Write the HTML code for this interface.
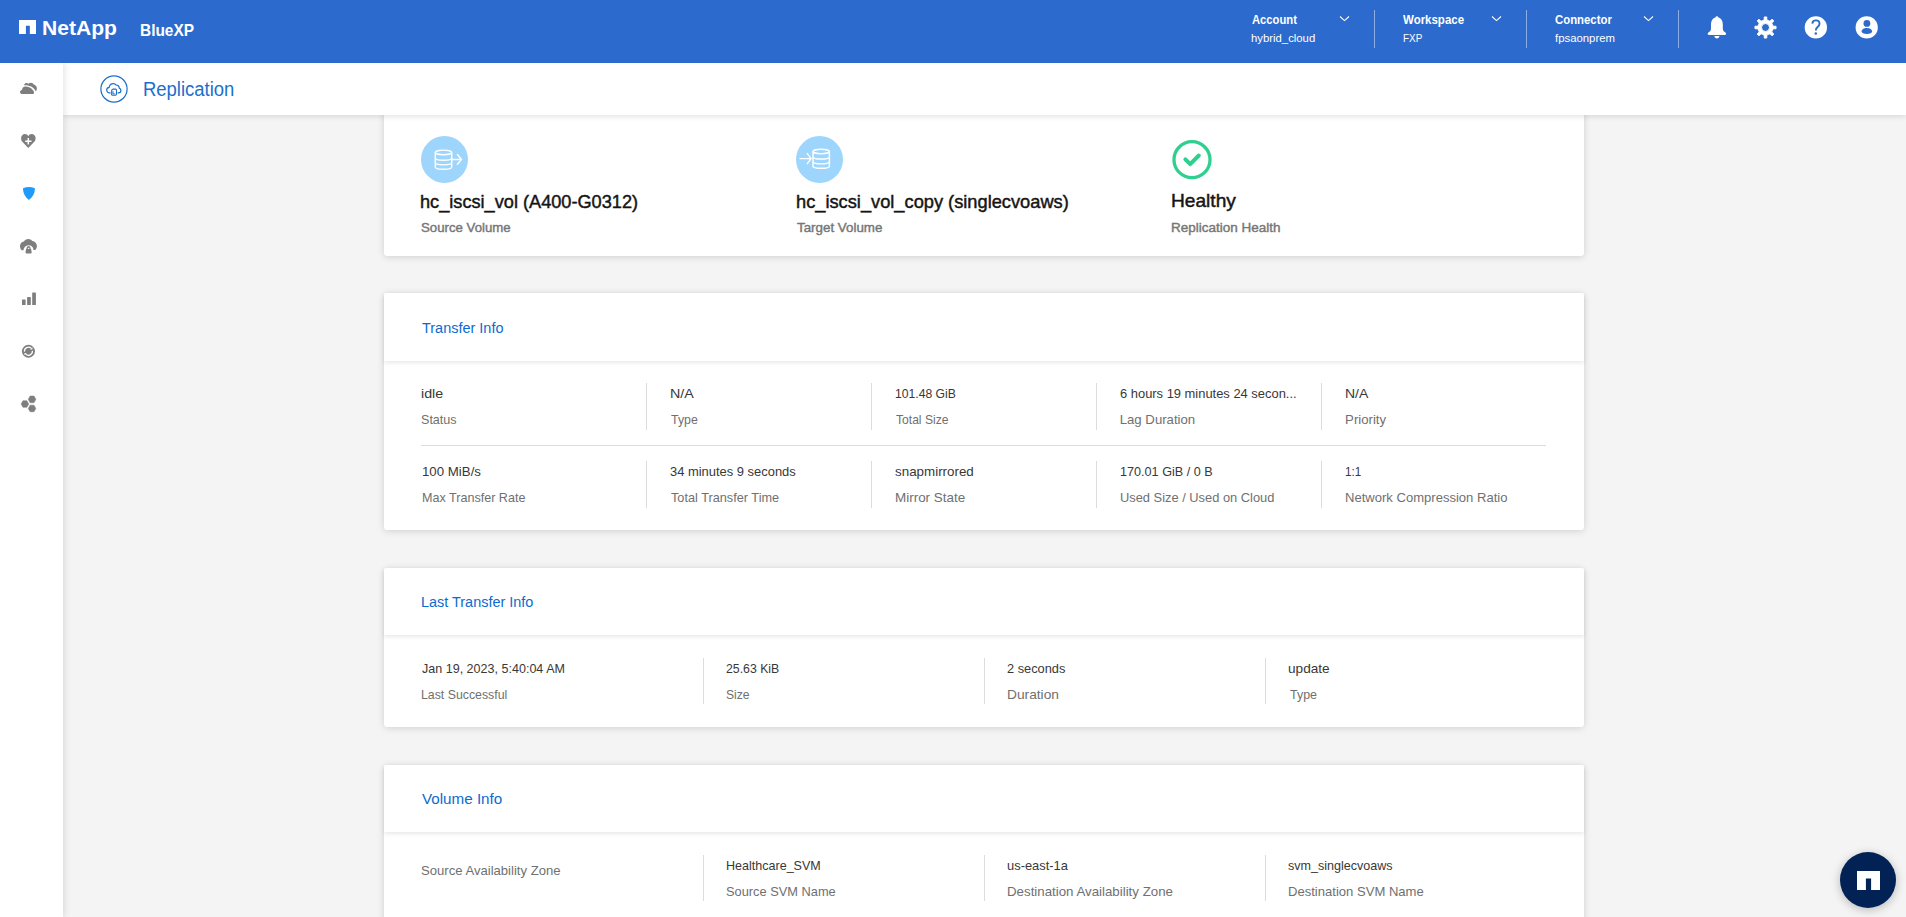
<!DOCTYPE html>
<html>
<head>
<meta charset="utf-8">
<title>Replication - BlueXP</title>
<style>
html,body{margin:0;padding:0;}
body{width:1906px;height:917px;overflow:hidden;position:relative;background:#f4f4f4;font-family:"Liberation Sans",sans-serif;}
.t{position:absolute;white-space:nowrap;transform-origin:0 0;}
.abs{position:absolute;}
#hdr{position:absolute;left:0;top:0;width:1906px;height:63px;background:#2d6acd;z-index:4;}
#side{position:absolute;left:0;top:63px;width:63px;height:854px;background:#ffffff;box-shadow:2px 0 6px rgba(0,0,0,0.10);z-index:3;}
#titlebar{position:absolute;left:63px;top:63px;width:1843px;height:52px;background:#ffffff;box-shadow:0 2px 5px rgba(0,0,0,0.10);z-index:2;}
.card{position:absolute;left:384px;width:1200px;background:#fff;box-shadow:0 1px 7px rgba(0,0,0,0.15);border-radius:3px;}
.chead{position:absolute;left:0;top:0;width:1200px;background:#fff;box-shadow:0 2px 4px rgba(0,0,0,0.09);border-radius:2px 2px 0 0;}
.vd{position:absolute;width:1px;background:#dcdcdc;}
.hd{position:absolute;height:1px;background:#dddddd;}
.hdv{position:absolute;width:1px;background:rgba(255,255,255,0.45);top:10px;height:38px;}
</style>
</head>
<body>
<div id="hdr">
  <!-- NetApp mark -->
  <svg class="abs" style="left:18.9px;top:20.3px" width="17.6" height="14.2" viewBox="0 0 17.6 14.2"><path d="M0 0H17.6V14.2H10.85V5.8H6.9V14.2H0Z" fill="#fff"/></svg>
  <!-- chevrons -->
  <svg class="abs" style="left:1339px;top:15px" width="11" height="7" viewBox="0 0 11 7"><path d="M1 1.5L5.5 5.6L10 1.5" fill="none" stroke="#fff" stroke-width="1.05"/></svg>
  <svg class="abs" style="left:1491px;top:15px" width="11" height="7" viewBox="0 0 11 7"><path d="M1 1.5L5.5 5.6L10 1.5" fill="none" stroke="#fff" stroke-width="1.05"/></svg>
  <svg class="abs" style="left:1643px;top:15px" width="11" height="7" viewBox="0 0 11 7"><path d="M1 1.5L5.5 5.6L10 1.5" fill="none" stroke="#fff" stroke-width="1.05"/></svg>
  <div class="hdv" style="left:1374px"></div>
  <div class="hdv" style="left:1526px"></div>
  <div class="hdv" style="left:1678px"></div>
  <!-- bell -->
  <svg class="abs" style="left:1700px;top:12px" width="34" height="32" viewBox="1700 12 34 32"><path fill="#fff" d="M1716.9 16.2C1717.6 16.2 1718.1 16.7 1718.2 17.3C1721.1 18.2 1722.8 21 1722.8 24.2V28.4C1722.8 30.2 1723.8 31.6 1725.4 32.5C1725.9 32.8 1726.1 33.3 1726.1 33.8C1726.1 34.5 1725.6 35 1724.9 35H1708.9C1708.2 35 1707.7 34.5 1707.7 33.8C1707.7 33.3 1707.9 32.8 1708.4 32.5C1710 31.6 1711 30.2 1711 28.4V24.2C1711 21 1712.7 18.2 1715.6 17.3C1715.7 16.7 1716.2 16.2 1716.9 16.2Z M1714.3 36H1719.5C1719.3 37.4 1718.2 38.4 1716.9 38.4C1715.6 38.4 1714.5 37.4 1714.3 36Z"/></svg>
  <!-- gear -->
  <svg class="abs" style="left:1753.8px;top:15.8px" width="23" height="23" viewBox="0 0 23 23"><path fill="#fff" stroke="#fff" stroke-width="1.0" stroke-linejoin="round" fill-rule="evenodd" d="M10.25 4.00 L10.25 0.97 L12.75 0.97 L12.75 4.00 A7.60 7.60 0 0 1 15.92 5.32 L18.06 3.17 L19.83 4.94 L17.68 7.08 A7.60 7.60 0 0 1 19.00 10.25 L22.03 10.25 L22.03 12.75 L19.00 12.75 A7.60 7.60 0 0 1 17.68 15.92 L19.83 18.06 L18.06 19.83 L15.92 17.68 A7.60 7.60 0 0 1 12.75 19.00 L12.75 22.03 L10.25 22.03 L10.25 19.00 A7.60 7.60 0 0 1 7.08 17.68 L4.94 19.83 L3.17 18.06 L5.32 15.92 A7.60 7.60 0 0 1 4.00 12.75 L0.97 12.75 L0.97 10.25 L4.00 10.25 A7.60 7.60 0 0 1 5.32 7.08 L3.17 4.94 L4.94 3.17 L7.08 5.32 A7.60 7.60 0 0 1 10.25 4.00Z M7.50 11.50 a4.00 4.00 0 1 0 8.00 0 a4.00 4.00 0 1 0 -8.00 0Z"/></svg>
  <!-- help -->
  <svg class="abs" style="left:1800px;top:12px" width="84" height="32" viewBox="1800 12 84 32"><circle cx="1815.85" cy="27.4" r="11.15" fill="#fff"/><path d="M1812.3 23.6C1812.5 21.6 1813.9 20.4 1815.9 20.4C1818 20.4 1819.5 21.8 1819.5 23.7C1819.5 25.2 1818.7 26 1817.6 26.9C1816.4 27.9 1815.9 28.6 1815.9 30V30.6" fill="none" stroke="#2d6acd" stroke-width="1.9"/><circle cx="1815.8" cy="33.5" r="1.25" fill="#2d6acd"/><circle cx="1866.7" cy="27.4" r="11.1" fill="#fff"/><circle cx="1866.9" cy="23.4" r="3.4" fill="#2d6acd"/><path d="M1861.6 31.6C1861.6 29.6 1863.9 28.1 1866.9 28.1C1869.9 28.1 1872.1 29.6 1872.1 31.6C1872.1 33.1 1869.9 34.1 1866.9 34.1C1863.9 34.1 1861.6 33.1 1861.6 31.6Z" fill="#2d6acd"/></svg>
</div>

<div id="side">
  <!-- cloud -->
  <svg class="abs" style="left:14px;top:13px" width="30" height="24" viewBox="14 76 30 24"><path fill="#7e7e7e" d="M21.9 94.1C20.8 94.1 20 93.2 20 92.1C20 91 20.8 90.1 21.9 90C22.2 88 23.4 86.5 25.3 86.4C27.9 86.3 31.6 87.6 33.3 90.7C33.8 91.1 34.1 91.7 34.1 92.4C34.1 93.4 33.4 94.1 32.4 94.1Z"/><path fill="#7e7e7e" d="M24.2 84.6C24.6 83.5 25.5 82.9 26.6 82.9C27.4 82.9 28.1 83.2 28.6 83.7C29.2 83.1 30 82.8 30.9 82.8C32.2 82.8 33.2 83.5 33.7 84.6C35.6 85.1 36.9 86.7 36.9 88.5C36.9 89.6 36.4 90.5 35.7 91.2C34.1 87.4 29.6 85 24.2 85.3Z"/></svg>
  <!-- heart plus -->
  <svg class="abs" style="left:16px;top:65px" width="26" height="26" viewBox="16 128 26 26"><path fill="#7e7e7e" d="M28.3 147.9L22.6 142.1C21.4 140.9 21.1 139.6 21.1 138.2C21.1 135.8 22.8 134 25 134C26.4 134 27.6 134.9 28.3 136.3C29 134.9 30.2 134 31.6 134C33.8 134 35.6 135.8 35.6 138.2C35.6 139.6 35.2 140.9 34 142.1Z"/><path d="M28.3 138.1V144.6M25.2 141.3H31.5" stroke="#fff" stroke-width="1.5"/></svg>
  <!-- shield active -->
  <svg class="abs" style="left:16px;top:117px" width="26" height="26" viewBox="16 180 26 26"><path fill="#1f9bfb" d="M23 188.3C25 187.4 26.9 186.9 28.9 186.9C30.9 186.9 32.9 187.4 34.9 188.3C34.9 193.2 32.6 197.3 28.9 199.9C25.2 197.3 23 193.2 23 188.3Z"/></svg>
  <!-- cloud lock -->
  <svg class="abs" style="left:14px;top:169px" width="30" height="30" viewBox="14 232 30 30"><path fill="#7e7e7e" d="M23.5 250.2H21.7C20.6 249.2 20 247.8 20 246.2C20 243.8 21.6 241.9 23.8 241.5C24.8 240 26.5 239.1 28.2 239.1C29.9 239.1 31.4 239.8 32.4 241.1C35 241.4 36.9 243.5 36.9 246.1C36.9 247.7 36.3 249.1 35.2 250.1H33.5A5 5 0 0 0 23.5 250.2Z"/><path fill="#7e7e7e" d="M26.1 249.1H31.1L31.7 252.6C31.7 253.1 31.3 253.4 30.8 253.4H26.4C25.9 253.4 25.5 253.1 25.5 252.6Z M26.4 249.3C26.4 247.4 27.3 246.1 28.6 246.1C29.9 246.1 30.8 247.4 30.8 249.3Z"/><rect x="27.8" y="247.8" width="1.6" height="1.1" fill="#fff"/></svg>
  <!-- bars -->
  <svg class="abs" style="left:14px;top:221px" width="30" height="30" viewBox="14 284 30 30"><rect x="22" y="299.5" width="3.6" height="5.5" rx="0.6" fill="#7e7e7e"/><rect x="27.1" y="296.9" width="3.7" height="8.1" rx="0.6" fill="#7e7e7e"/><rect x="32.2" y="292.5" width="3.7" height="12.5" rx="0.6" fill="#7e7e7e"/></svg>
  <!-- sync circle -->
  <svg class="abs" style="left:14px;top:273px" width="30" height="30" viewBox="14 336 30 30"><circle cx="28.45" cy="351.25" r="6.5" fill="#7e7e7e"/><path d="M24.47 351.60 A4.00 4.00 0 0 1 31.28 348.42 M32.43 350.90 A4.00 4.00 0 0 1 25.62 354.08" fill="none" stroke="#fff" stroke-width="1.25"/><path d="M32.41 349.55 L32.41 347.29 L30.15 349.55 Z M24.49 352.95 L24.49 355.21 L26.75 352.95 Z" fill="#fff"/></svg>
  <!-- hexagons -->
  <svg class="abs" style="left:14px;top:326px" width="30" height="30" viewBox="14 389 30 30"><path d="M21.10 404.00 L22.95 400.70 L26.85 400.70 L28.70 404.00 L26.85 407.30 L22.95 407.30ZM28.25 399.35 L30.10 396.05 L34.00 396.05 L35.85 399.35 L34.00 402.65 L30.10 402.65ZM28.25 408.45 L30.10 405.15 L34.00 405.15 L35.85 408.45 L34.00 411.75 L30.10 411.75Z" fill="#7e7e7e" stroke="#7e7e7e" stroke-width="0.5" stroke-linejoin="round"/></svg>
</div>

<div id="titlebar">
  <svg class="abs" style="left:37px;top:12px" width="28" height="28" viewBox="0 0 28 28"><g fill="none" stroke="#1b6fcb"><circle cx="14" cy="14" r="13.1" stroke-width="1.2"/><path d="M10.6 17.9H9.6C7.9 17.9 6.7 16.6 6.7 15.1C6.7 13.7 7.7 12.6 9.1 12.4C9.5 10.3 11.1 8.6 13.3 8.6C14.5 8.6 15.5 9.2 16.2 10C18 10.1 19.3 11.5 19.3 13.1C20.3 13.5 20.9 14.4 20.9 15.5C20.9 16.8 19.9 17.8 18.6 17.8H17.6" stroke-width="1.2"/><path d="M12.9 14.1H15.7L16.5 14.9V19.2L15.7 20.2H12.1L11.7 19.6V15.2Z" stroke-width="1.15" stroke-linejoin="round"/><path d="M13 16.3V18.9H14.8" stroke-width="1"/></g></svg>
</div>

<!-- card 1 -->
<div class="card" style="top:40px;height:216px;">
  <svg class="abs" style="left:37px;top:96px" width="47" height="47" viewBox="0 0 47 47"><circle cx="23.5" cy="23.5" r="23.5" fill="#9dd5fc"/><g fill="none" stroke="#fff" stroke-width="1.45"><ellipse cx="22.5" cy="16.4" rx="8.2" ry="2.3"/><path d="M14.3 16.4V30.9C14.3 33.96 30.7 33.96 30.7 30.9V16.4"/><path d="M14.3 21.9C14.3 24.96 30.7 24.96 30.7 21.9"/><path d="M14.3 26.6C14.3 29.66 30.7 29.66 30.7 26.6"/><path d="M30.7 23.4H40.3M36.4 18.6L40.6 23.4L36.4 28.3" stroke-linecap="round" stroke-linejoin="round"/></g></svg>
  <svg class="abs" style="left:412px;top:96px" width="47" height="47" viewBox="0 0 47 47"><circle cx="23.5" cy="23.5" r="23.5" fill="#9dd5fc"/><g fill="none" stroke="#fff" stroke-width="1.45"><ellipse cx="25.2" cy="15.5" rx="8.2" ry="2.2"/><path d="M17.0 15.5V30.2C17.0 32.99 33.4 32.99 33.4 30.2V15.5"/><path d="M17.0 20.9C17.0 23.69 33.4 23.69 33.4 20.9"/><path d="M17.0 25.8C17.0 28.59 33.4 28.59 33.4 25.8"/><path d="M4 22.6H14.8M11.3 17.6L15.1 22.6L11.3 27.6" stroke-linecap="round" stroke-linejoin="round"/></g></svg>
  <svg class="abs" style="left:788px;top:99.6px" width="40" height="40" viewBox="0 0 40 40"><circle cx="20" cy="19.7" r="18" fill="none" stroke="#2fd08f" stroke-width="3.3"/><path d="M13.4 19.4L18.2 24.2L26.8 15.5" fill="none" stroke="#2fd08f" stroke-width="4" stroke-linecap="round" stroke-linejoin="round"/></svg>
</div>

<!-- card 2 transfer info -->
<div class="card" style="top:293px;height:237px;">
  <div class="chead" style="height:68px;"></div>
  <div class="vd" style="left:262px;top:90px;height:47px"></div>
  <div class="vd" style="left:487px;top:90px;height:47px"></div>
  <div class="vd" style="left:712px;top:90px;height:47px"></div>
  <div class="vd" style="left:937px;top:90px;height:47px"></div>
  <div class="hd" style="left:37px;top:152px;width:1125px"></div>
  <div class="vd" style="left:262px;top:168px;height:47px"></div>
  <div class="vd" style="left:487px;top:168px;height:47px"></div>
  <div class="vd" style="left:712px;top:168px;height:47px"></div>
  <div class="vd" style="left:937px;top:168px;height:47px"></div>
</div>

<!-- card 3 last transfer -->
<div class="card" style="top:568px;height:159px;">
  <div class="chead" style="height:67px;"></div>
  <div class="vd" style="left:319px;top:90px;height:46px"></div>
  <div class="vd" style="left:600px;top:90px;height:46px"></div>
  <div class="vd" style="left:881px;top:90px;height:46px"></div>
</div>

<!-- card 4 volume info -->
<div class="card" style="top:765px;height:200px;">
  <div class="chead" style="height:67px;"></div>
  <div class="vd" style="left:319px;top:90px;height:46px"></div>
  <div class="vd" style="left:600px;top:90px;height:46px"></div>
  <div class="vd" style="left:881px;top:90px;height:46px"></div>
</div>

<!-- texts -->
<div style="position:absolute;left:0;top:0;z-index:5">
<div class="t" style="left:41.95px;top:17.67px;font-size:20px;line-height:20px;font-weight:700;color:#ffffff;transform:scaleX(1.0543);">NetApp</div>
<div class="t" style="left:139.66px;top:21.73px;font-size:16.5px;line-height:16.5px;font-weight:700;color:#ffffff;transform:scaleX(0.9357);">BlueXP</div>
<div class="t" style="left:1251.80px;top:14.22px;font-size:12.5px;line-height:12.5px;font-weight:700;color:#ffffff;transform:scaleX(0.8980);">Account</div>
<div class="t" style="left:1250.82px;top:32.67px;font-size:11.5px;line-height:11.5px;font-weight:400;color:#ffffff;transform:scaleX(0.9844);">hybrid_cloud</div>
<div class="t" style="left:1403.40px;top:14.22px;font-size:12.5px;line-height:12.5px;font-weight:700;color:#ffffff;transform:scaleX(0.9182);">Workspace</div>
<div class="t" style="left:1402.54px;top:32.67px;font-size:11.5px;line-height:11.5px;font-weight:400;color:#ffffff;transform:scaleX(0.8619);">FXP</div>
<div class="t" style="left:1555.00px;top:14.22px;font-size:12.5px;line-height:12.5px;font-weight:700;color:#ffffff;transform:scaleX(0.9095);">Connector</div>
<div class="t" style="left:1555.00px;top:32.67px;font-size:11.5px;line-height:11.5px;font-weight:400;color:#ffffff;transform:scaleX(0.9883);">fpsaonprem</div>
<div class="t" style="left:142.71px;top:79.59px;font-size:19.5px;line-height:19.5px;font-weight:400;color:#1b6fcb;transform:scaleX(0.9468);">Replication</div>
<div class="t" style="left:420.22px;top:192.84px;font-size:18.5px;line-height:18.5px;font-weight:400;color:#151515;transform:scaleX(0.9818);-webkit-text-stroke:0.45px #151515;">hc_iscsi_vol (A400-G0312)</div>
<div class="t" style="left:420.58px;top:221.00px;font-size:13px;line-height:13px;font-weight:400;color:#767676;transform:scaleX(1.0172);-webkit-text-stroke:0.4px #767676;">Source Volume</div>
<div class="t" style="left:796.31px;top:192.84px;font-size:18.5px;line-height:18.5px;font-weight:400;color:#151515;transform:scaleX(0.9862);-webkit-text-stroke:0.45px #151515;">hc_iscsi_vol_copy (singlecvoaws)</div>
<div class="t" style="left:796.80px;top:221.00px;font-size:13px;line-height:13px;font-weight:400;color:#767676;transform:scaleX(1.0277);-webkit-text-stroke:0.4px #767676;">Target Volume</div>
<div class="t" style="left:1171.47px;top:192.44px;font-size:18.5px;line-height:18.5px;font-weight:400;color:#151515;transform:scaleX(1.0339);-webkit-text-stroke:0.45px #151515;">Healthy</div>
<div class="t" style="left:1170.76px;top:220.70px;font-size:13px;line-height:13px;font-weight:400;color:#767676;transform:scaleX(1.0385);-webkit-text-stroke:0.4px #767676;">Replication Health</div>
<div class="t" style="left:421.80px;top:320.18px;font-size:15.5px;line-height:15.5px;font-weight:400;color:#0b6bcf;transform:scaleX(0.9333);">Transfer Info</div>
<div class="t" style="left:421.27px;top:594.08px;font-size:15.5px;line-height:15.5px;font-weight:400;color:#0b6bcf;transform:scaleX(0.9311);">Last Transfer Info</div>
<div class="t" style="left:421.60px;top:791.08px;font-size:15.5px;line-height:15.5px;font-weight:400;color:#0b6bcf;transform:scaleX(0.9802);">Volume Info</div>
<div class="t" style="left:421.32px;top:387.13px;font-size:13.2px;line-height:13.2px;font-weight:400;color:#383838;transform:scaleX(1.0789);">idle</div>
<div class="t" style="left:421.45px;top:412.93px;font-size:13.2px;line-height:13.2px;font-weight:400;color:#707070;transform:scaleX(0.9528);">Status</div>
<div class="t" style="left:669.82px;top:387.13px;font-size:13.2px;line-height:13.2px;font-weight:400;color:#383838;transform:scaleX(1.0810);">N/A</div>
<div class="t" style="left:670.90px;top:412.93px;font-size:13.2px;line-height:13.2px;font-weight:400;color:#707070;transform:scaleX(0.9393);">Type</div>
<div class="t" style="left:895.48px;top:387.13px;font-size:13.2px;line-height:13.2px;font-weight:400;color:#383838;transform:scaleX(0.9231);">101.48 GiB</div>
<div class="t" style="left:896.40px;top:412.93px;font-size:13.2px;line-height:13.2px;font-weight:400;color:#707070;transform:scaleX(0.9175);">Total Size</div>
<div class="t" style="left:1119.72px;top:387.13px;font-size:13.2px;line-height:13.2px;font-weight:400;color:#383838;transform:scaleX(0.9792);">6 hours 19 minutes 24 secon...</div>
<div class="t" style="left:1119.70px;top:412.93px;font-size:13.2px;line-height:13.2px;font-weight:400;color:#707070;">Lag Duration</div>
<div class="t" style="left:1345.04px;top:387.13px;font-size:13.2px;line-height:13.2px;font-weight:400;color:#383838;transform:scaleX(1.0619);">N/A</div>
<div class="t" style="left:1345.10px;top:412.93px;font-size:13.2px;line-height:13.2px;font-weight:400;color:#707070;">Priority</div>
<div class="t" style="left:421.69px;top:464.53px;font-size:13.2px;line-height:13.2px;font-weight:400;color:#383838;transform:scaleX(1.0053);">100 MiB/s</div>
<div class="t" style="left:421.75px;top:490.53px;font-size:13.2px;line-height:13.2px;font-weight:400;color:#707070;transform:scaleX(0.9533);">Max Transfer Rate</div>
<div class="t" style="left:669.62px;top:464.53px;font-size:13.2px;line-height:13.2px;font-weight:400;color:#383838;transform:scaleX(0.9803);">34 minutes 9 seconds</div>
<div class="t" style="left:670.60px;top:490.53px;font-size:13.2px;line-height:13.2px;font-weight:400;color:#707070;transform:scaleX(0.9643);">Total Transfer Time</div>
<div class="t" style="left:894.59px;top:464.53px;font-size:13.2px;line-height:13.2px;font-weight:400;color:#383838;transform:scaleX(1.0145);">snapmirrored</div>
<div class="t" style="left:894.58px;top:490.53px;font-size:13.2px;line-height:13.2px;font-weight:400;color:#707070;transform:scaleX(1.0194);">Mirror State</div>
<div class="t" style="left:1119.84px;top:464.53px;font-size:13.2px;line-height:13.2px;font-weight:400;color:#383838;transform:scaleX(0.9579);">170.01 GiB / 0 B</div>
<div class="t" style="left:1119.82px;top:490.53px;font-size:13.2px;line-height:13.2px;font-weight:400;color:#707070;transform:scaleX(0.9752);">Used Size / Used on Cloud</div>
<div class="t" style="left:1345.32px;top:464.53px;font-size:13.2px;line-height:13.2px;font-weight:400;color:#383838;transform:scaleX(0.8824);">1:1</div>
<div class="t" style="left:1345.21px;top:490.53px;font-size:13.2px;line-height:13.2px;font-weight:400;color:#707070;transform:scaleX(0.9896);">Network Compression Ratio</div>
<div class="t" style="left:422.10px;top:662.23px;font-size:13.2px;line-height:13.2px;font-weight:400;color:#383838;transform:scaleX(0.9510);">Jan 19, 2023, 5:40:04 AM</div>
<div class="t" style="left:421.17px;top:687.83px;font-size:13.2px;line-height:13.2px;font-weight:400;color:#707070;transform:scaleX(0.9341);">Last Successful</div>
<div class="t" style="left:725.87px;top:662.23px;font-size:13.2px;line-height:13.2px;font-weight:400;color:#383838;transform:scaleX(0.9321);">25.63 KiB</div>
<div class="t" style="left:725.88px;top:687.83px;font-size:13.2px;line-height:13.2px;font-weight:400;color:#707070;transform:scaleX(0.9208);">Size</div>
<div class="t" style="left:1007.13px;top:662.23px;font-size:13.2px;line-height:13.2px;font-weight:400;color:#383838;transform:scaleX(0.9712);">2 seconds</div>
<div class="t" style="left:1007.06px;top:687.83px;font-size:13.2px;line-height:13.2px;font-weight:400;color:#707070;transform:scaleX(1.0417);">Duration</div>
<div class="t" style="left:1288.47px;top:662.23px;font-size:13.2px;line-height:13.2px;font-weight:400;color:#383838;transform:scaleX(1.0333);">update</div>
<div class="t" style="left:1289.50px;top:687.83px;font-size:13.2px;line-height:13.2px;font-weight:400;color:#707070;transform:scaleX(0.9429);">Type</div>
<div class="t" style="left:725.85px;top:859.13px;font-size:13.2px;line-height:13.2px;font-weight:400;color:#383838;transform:scaleX(0.9510);">Healthcare_SVM</div>
<div class="t" style="left:725.83px;top:884.93px;font-size:13.2px;line-height:13.2px;font-weight:400;color:#707070;transform:scaleX(0.9721);">Source SVM Name</div>
<div class="t" style="left:1007.42px;top:859.13px;font-size:13.2px;line-height:13.2px;font-weight:400;color:#383838;transform:scaleX(0.9787);">us-east-1a</div>
<div class="t" style="left:1007.39px;top:884.93px;font-size:13.2px;line-height:13.2px;font-weight:400;color:#707070;transform:scaleX(1.0074);">Destination Availability Zone</div>
<div class="t" style="left:1288.25px;top:859.13px;font-size:13.2px;line-height:13.2px;font-weight:400;color:#383838;transform:scaleX(0.9514);">svm_singlecvoaws</div>
<div class="t" style="left:1288.21px;top:884.93px;font-size:13.2px;line-height:13.2px;font-weight:400;color:#707070;transform:scaleX(0.9904);">Destination SVM Name</div>
<div class="t" style="left:421.11px;top:864.03px;font-size:13.2px;line-height:13.2px;font-weight:400;color:#707070;transform:scaleX(0.9928);">Source Availability Zone</div>
</div>

<!-- floating bubble -->
<div class="abs" style="left:1840px;top:852px;width:56px;height:56px;border-radius:50%;background:#022255;box-shadow:0 2px 10px rgba(0,0,0,0.25);z-index:6">
  <svg class="abs" style="left:16.5px;top:18.6px" width="23" height="19" viewBox="0 0 23 19"><path d="M0 0H23V19H14.1V7.4H8.9V19H0Z" fill="#fff"/></svg>
</div>
</body>
</html>
